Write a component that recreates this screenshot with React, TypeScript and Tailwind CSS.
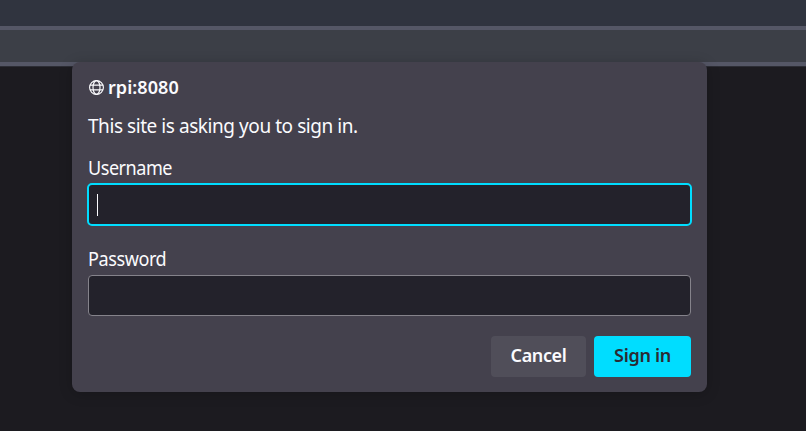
import { useState } from "react";

function GlobeIcon() {
  return (
    <svg
      viewBox="0 0 16 16"
      className="h-4 w-4 shrink-0"
      fill="none"
      stroke="#fbfbfe"
      strokeWidth="1.15"
      aria-hidden="true"
    >
      <circle cx="8.5" cy="8.5" r="6.9" />
      <ellipse cx="8.5" cy="8.5" rx="3.5" ry="6.9" />
      <path d="M2 6.1h13M2 10.9h13" />
    </svg>
  );
}

function SignInDialog() {
  const [password, setPassword] = useState("");
  return (
    <form
      role="dialog"
      onSubmit={(event) => event.preventDefault()}
      className="absolute left-[72px] top-[62px] flex h-[330px] w-[635px] flex-col rounded-lg bg-[#44414d] px-4 pt-[13px] text-[#fbfbfe] shadow-[0_2px_14px_rgba(0,0,0,0.2)]"
    >
      <div className="flex h-6 items-center gap-1">
        <GlobeIcon />
        <h1 className="whitespace-nowrap text-[18px] font-semibold leading-6 tracking-[0.05px]">rpi:8080</h1>
      </div>
      <p className="mt-[15px] whitespace-nowrap text-[19px] leading-6 tracking-[-0.44px]">
        This site is asking you to sign in.
      </p>
      <div className="mt-[18px] origin-left scale-x-95 text-[19px] leading-6 tracking-[-0.5px]">Username</div>
      <div className="-mx-px mt-[3px] flex h-[43px] shrink-0 items-center rounded-[5px] border-2 border-[#00ddff] bg-[#23222b] pl-2">
        <span className="h-[22px] w-px bg-[#fbfbfe]" />
      </div>
      <label
        htmlFor="password"
        className="mt-[21px] origin-left scale-x-95 text-[19px] leading-6 tracking-[-0.45px]"
      >
        Password
      </label>
      <input
        id="password"
        type="password"
        value={password}
        onChange={(event) => setPassword(event.target.value)}
        className="mt-1 h-[41px] w-full shrink-0 rounded-[4px] border border-[#85838b] bg-[#23222b] px-2 outline-none"
      />
      <div className="mt-5 flex justify-end gap-2 text-[18px] font-semibold tracking-[-0.4px]">
        <button type="button" className="h-[41px] w-[95px] whitespace-nowrap rounded-[4px] bg-[#504e59] pb-0.5">
          Cancel
        </button>
        <button
          type="submit"
          className="h-[41px] w-[97px] whitespace-nowrap rounded-[4px] bg-[#00ddff] pb-0.5 tracking-[-0.3px] text-[#2b2a33]"
        >
          Sign in
        </button>
      </div>
    </form>
  );
}

export default function App() {
  return (
    <div className="relative flex h-[431px] w-[806px] flex-col overflow-hidden bg-[#1c1b20] font-['Noto_Sans','Open_Sans',sans-serif]">
      <div className="h-[30px] shrink-0 border-b-4 border-[#555766] bg-[#30343f]" />
      <div className="h-9 shrink-0 border-b-4 border-[#555766] bg-[#3c3f47]" />
      <div className="h-px shrink-0 bg-[#2c2d35]" />
      <SignInDialog />
    </div>
  );
}
